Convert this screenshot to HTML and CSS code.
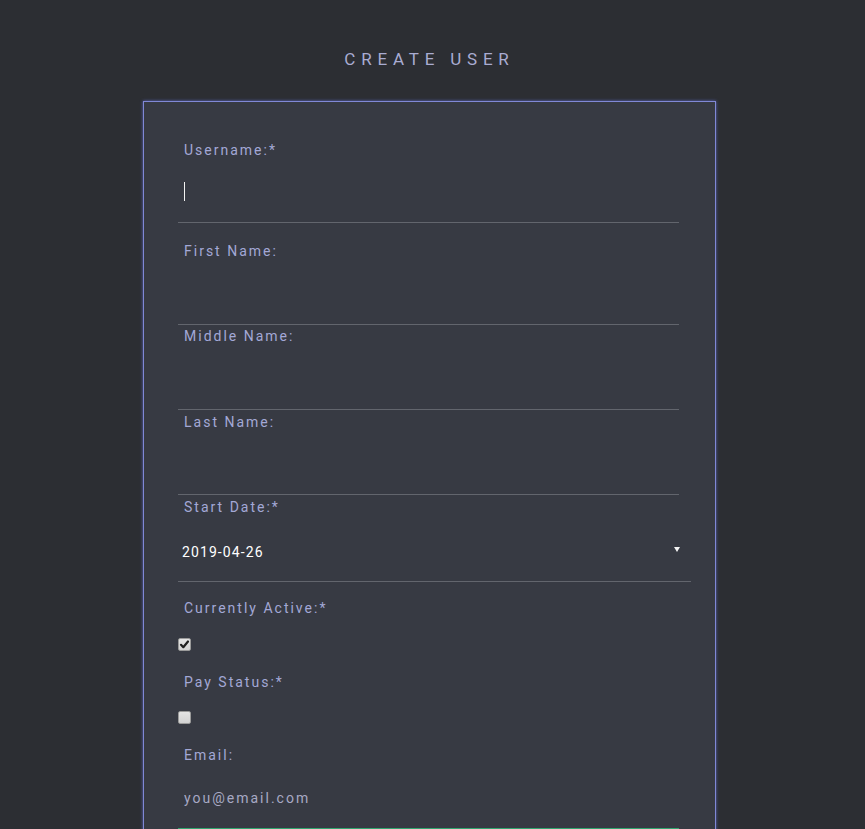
FILE: index.html
```html
<!DOCTYPE html>
<html lang="en">
<head>
<meta charset="utf-8">
<title>Create User</title>
<link rel="stylesheet" href="styles.css">
</head>
<body>
<main class="page">
  <h1 class="title">CREATE USER</h1>
  <form class="card">
    <div class="field field-first">
      <label class="label" for="username">Username:*</label>
      <div class="text-wrap">
        <input class="text-input short" id="username" type="text">
        <span class="caret"></span>
      </div>
    </div>
    <div class="field field-gap">
      <label class="label" for="first">First Name:</label>
      <input class="text-input" id="first" type="text">
    </div>
    <div class="field field-tight">
      <label class="label" for="middle">Middle Name:</label>
      <input class="text-input" id="middle" type="text">
    </div>
    <div class="field field-tight2">
      <label class="label" for="last">Last Name:</label>
      <input class="text-input short" id="last" type="text">
    </div>
    <div class="field field-tight3">
      <label class="label">Start Date:*</label>
      <div class="date-input">
        <span class="date-value">2019-04-26</span>
        <span class="date-arrow"></span>
      </div>
    </div>
    <div class="field field-check">
      <label class="label">Currently Active:*</label>
      <span class="checkbox checked">
        <svg viewBox="0 0 13 13" width="13" height="13"><path d="M3 6.8 L5.3 9.2 L10 3.5" fill="none" stroke="#1e1e1e" stroke-width="2.2" stroke-linecap="round" stroke-linejoin="round"/></svg>
      </span>
    </div>
    <div class="field field-check2">
      <label class="label">Pay Status:*</label>
      <span class="checkbox second"></span>
    </div>
    <div class="field field-check3">
      <label class="label" for="email">Email:</label>
      <input class="text-input email" id="email" type="text" placeholder="you@email.com">
    </div>
  </form>
</main>
</body>
</html>
```

FILE: styles.css
```css
html, body {
  margin: 0;
  padding: 0;
  background: #2c2e33;
  height: 100%;
  overflow: hidden;
}

.page {
  display: flex;
  flex-direction: column;
  align-items: center;
  padding-right: 6px;
  font-family: Roboto, "Liberation Sans", sans-serif;
}

.title {
  margin: 49px 0 0 0;
  font-size: 17px;
  line-height: 20px;
  font-weight: 400;
  letter-spacing: 5.8px;
  color: #a9acd2;
}

.card {
  margin-top: 32px;
  width: 573px;
  height: 760px;
  background: #373a43;
  border: 1px solid #8088d6;
  box-shadow: 0 0 3px 0 #5a64b8;
  padding: 0 0 0 34px;
  box-sizing: border-box;
  display: flex;
  flex-direction: column;
}

.field {
  display: flex;
  flex-direction: column;
  align-items: flex-start;
}

.field-first { margin-top: 40px; }
.field-gap { margin-top: 20px; }
.field-tight { margin-top: 3px; }
.field-tight2 { margin-top: 4px; }
.field-tight3 { margin-top: 4px; }
.field-check { margin-top: 18px; }
.field-check2 { margin-top: 23px; }
.field-check3 { margin-top: 23px; }

.label {
  display: block;
  font-size: 14px;
  line-height: 17px;
  letter-spacing: 2px;
  color: #a3a8d6;
  padding-left: 6px;
}

.text-wrap {
  position: relative;
}

.text-input {
  display: block;
  width: 501px;
  height: 65px;
  box-sizing: border-box;
  margin: 0;
  padding: 0 6px;
  background: transparent;
  border: none;
  border-bottom: 1px solid #62656d;
  outline: none;
  font-family: Roboto, "Liberation Sans", sans-serif;
  font-size: 14px;
  letter-spacing: 2px;
  color: #ffffff;
}

.text-input.short {
  height: 64px;
}

.text-input.email {
  height: 65px;
  padding-top: 4px;
  border-bottom-color: #2fa56f;
}

.text-input::placeholder {
  color: #a7a9c4;
  opacity: 1;
}

.caret {
  position: absolute;
  left: 6px;
  top: 23px;
  width: 1px;
  height: 19px;
  background: #f2f2f2;
}

.date-input {
  width: 513px;
  height: 66px;
  box-sizing: border-box;
  border-bottom: 1px solid #62656d;
  display: flex;
  align-items: center;
  justify-content: space-between;
  padding: 6px 11px 0 4px;
}

.date-value {
  font-size: 14px;
  color: #ffffff;
  letter-spacing: 1.1px;
}

.date-arrow {
  width: 0;
  height: 0;
  border-left: 3px solid transparent;
  border-right: 3px solid transparent;
  border-top: 5px solid #f4f4f4;
  margin-top: -4px;
}

.checkbox {
  display: block;
  width: 13px;
  height: 13px;
  box-sizing: border-box;
  margin-top: 21px;
  background: linear-gradient(#e4e4e4, #d2d2d2);
  border: 1px solid #9a9a9a;
  border-radius: 2px;
  position: relative;
}

.checkbox.second {
  margin-top: 20px;
}

.checkbox svg {
  position: absolute;
  left: -1px;
  top: -1px;
}
```
